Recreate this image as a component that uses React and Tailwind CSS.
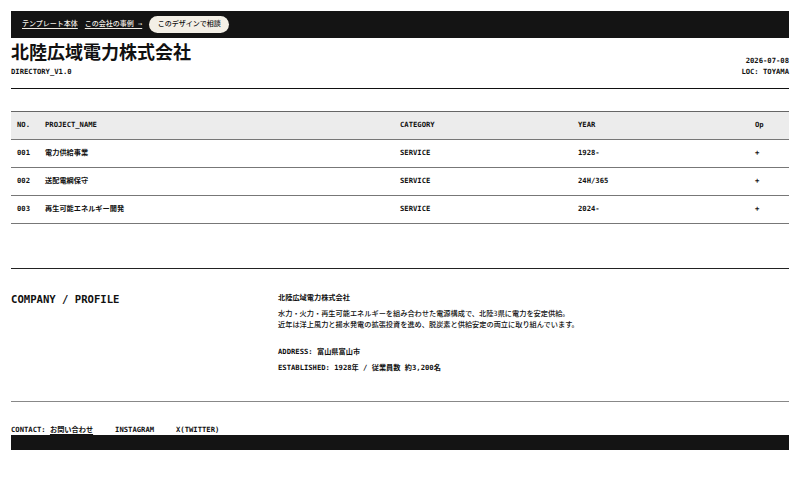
import React from 'react';

const mono = "font-['DejaVu_Sans_Mono','Noto_Sans_CJK_JP',monospace]";

const projects = [
  { no: '001', name: '電力供給事業', category: 'SERVICE', year: '1928-' },
  { no: '002', name: '送配電網保守', category: 'SERVICE', year: '24H/365' },
  { no: '003', name: '再生可能エネルギー開発', category: 'SERVICE', year: '2024-' },
];

const cols = 'grid grid-cols-[28px_355px_178px_177px_1fr] items-center px-[6px]';

export default function App() {
  return (
    <div className={`${mono} bg-white text-[#111] px-[11px] pt-[11px] pb-[50px] text-[7.2px] font-bold`}>
      {/* top nav bar */}
      <div className="h-[27px] bg-[#141414] flex items-center gap-[7px] pl-[11px] text-[7px]">
        <a href="#" className="text-[#f3efe6] underline underline-offset-2 font-medium">テンプレート本体</a>
        <a href="#" className="text-[#f3efe6] underline underline-offset-2 font-medium">この会社の事例 →</a>
        <button className="h-[17px] w-[80px] rounded-full bg-[#f3efe6] text-[#111] font-medium">このデザインで相談</button>
      </div>

      {/* header */}
      <div className="flex justify-between items-end pt-[3px] pb-[11px] border-b-[1.5px] border-[#111]">
        <div>
          <h1 className="text-[18px] leading-[24px] font-bold">北陸広域電力株式会社</h1>
          <div className="mt-[1px] leading-[11px]">DIRECTORY_V1.0</div>
        </div>
        <div className="text-right leading-[11px]">
          <div>2026-07-08</div>
          <div>LOC: TOYAMA</div>
        </div>
      </div>

      {/* project table */}
      <div className="mt-[22px] border-t border-[#666]">
        <div className={`${cols} h-[28px] bg-[#ececec] border-b border-[#777]`}>
          <div>NO.</div>
          <div>PROJECT_NAME</div>
          <div>CATEGORY</div>
          <div>YEAR</div>
          <div>Op</div>
        </div>
        {projects.map(p => (
          <div key={p.no} className={`${cols} h-[28px] border-b border-[#777]`}>
            <div>{p.no}</div>
            <div>{p.name}</div>
            <div>{p.category}</div>
            <div>{p.year}</div>
            <div>+</div>
          </div>
        ))}
      </div>

      {/* profile */}
      <div className="mt-[44px] border-t-[1.5px] border-[#222] pt-[23px] pb-[28px] flex">
        <h2 className="w-[267px] text-[10.6px] leading-[14px] font-bold">COMPANY / PROFILE</h2>
        <div className="leading-[11px]">
          <div>北陸広域電力株式会社</div>
          <p className="mt-[5px] font-medium">
            水力・火力・再生可能エネルギーを組み合わせた電源構成で、北陸3県に電力を安定供給。<br />
            近年は洋上風力と揚水発電の拡張投資を進め、脱炭素と供給安定の両立に取り組んでいます。
          </p>
          <div className="mt-[16px]">ADDRESS: 富山県富山市</div>
          <div className="mt-[5px]">ESTABLISHED: 1928年 / 従業員数 約3,200名</div>
        </div>
      </div>

      {/* footer */}
      <div className="border-t border-[#888] pt-[22px]">
        <div className="flex gap-[22px] leading-[11px]">
          <div>CONTACT: <a href="#" className="underline underline-offset-2">お問い合わせ</a></div>
          <div>INSTAGRAM</div>
          <div>X(TWITTER)</div>
        </div>
        <div className="h-[15px] bg-[#141414]" />
      </div>
    </div>
  );
}
